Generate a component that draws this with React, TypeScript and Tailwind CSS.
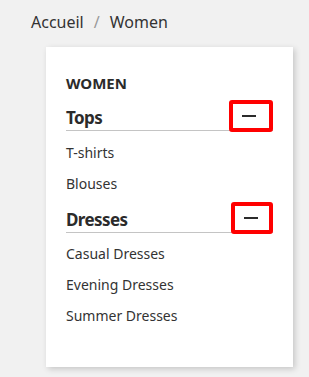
import React from "react";

function Row({ title, boxW }: { title: string; boxW: string }) {
  return (
    <div className="flex items-end justify-between border-b border-[#c4c4c4]">
      <span className="text-[17px] font-bold leading-[24px] tracking-[-0.6px] text-[#2b2b2b]">{title}</span>
      <button
        className={`-mb-[2px] flex h-[32px] ${boxW} items-center rounded-[3px] border-4 border-[#ff0000] bg-white pl-[9px]`}
      >
        <span className="block h-[2px] w-[14px] bg-[#2b2b2b]" />
      </button>
    </div>
  );
}

export default function App() {
  const font = { fontFamily: '"Noto Sans", "Open Sans", sans-serif' };
  return (
    <div className="min-h-[377px] w-full bg-[#f1f1f1]" style={font}>
      <div className="pl-[31px] pt-[10px] text-[16px] leading-[24px] text-[#333]">
        <span>Accueil</span>
        <span className="mx-[10px] text-[#999]">/</span>
        <span>Women</span>
      </div>
      <div className="ml-[46px] mt-[13px] h-[320px] w-[247px] bg-white px-[20px] pt-[26px] shadow-[2px_2px_6px_rgba(0,0,0,0.18)]">
        <div className="text-[15px] font-bold leading-[20px] text-[#2b2b2b]">WOMEN</div>
        <div className="mt-[7px]">
          <Row title="Tops" boxW="w-[44px]" />
          <ul className="mt-[6px] text-[14px] leading-[31px] text-[#333]">
            <li>T-shirts</li>
            <li>Blouses</li>
          </ul>
        </div>
        <div className="mt-[3px]">
          <Row title="Dresses" boxW="w-[42px]" />
          <ul className="mt-[5px] text-[14px] leading-[31px] text-[#333]">
            <li>Casual Dresses</li>
            <li>Evening Dresses</li>
            <li>Summer Dresses</li>
          </ul>
        </div>
      </div>
    </div>
  );
}
